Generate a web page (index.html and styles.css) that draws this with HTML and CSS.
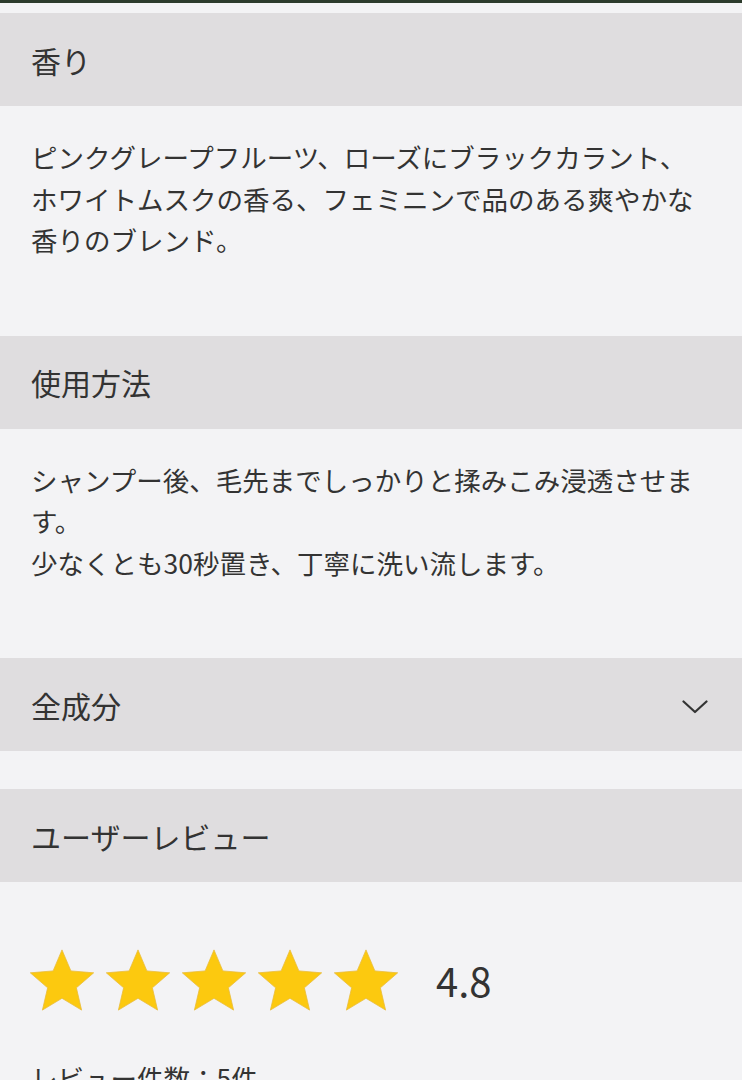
FILE: index.html
```html
<!DOCTYPE html>
<html lang="ja">
<head>
<meta charset="utf-8">
<link rel="stylesheet" href="styles.css">
</head>
<body>
<div class="topbar"></div>
<div class="page">
  <section class="block">
    <h2 class="head">香り</h2>
    <div class="body">
      <p>ピンクグレープフルーツ、ローズにブラックカラント、ホワイトムスクの香る、フェミニンで品のある爽やかな香りのブレンド。</p>
    </div>
  </section>
  <section class="block">
    <h2 class="head">使用方法</h2>
    <div class="body">
      <p>シャンプー後、毛先までしっかりと揉みこみ浸透させます。<br>少なくとも30秒置き、丁寧に洗い流します。</p>
    </div>
  </section>
  <section class="block collapsed">
    <h2 class="head">全成分
      <svg class="chev" width="26" height="14" viewBox="0 0 26 14"><path d="M1.5 1.5 L13 12 L24.5 1.5" fill="none" stroke="#333" stroke-width="2.2" stroke-linecap="round" stroke-linejoin="round"/></svg>
    </h2>
  </section>
  <section class="block review">
    <h2 class="head">ユーザーレビュー</h2>
    <div class="rating">
      <div class="stars">
        <svg class="star" viewBox="1.9 1.9 20.2 19.2"><path d="M12 17.27L18.18 21l-1.64-7.03L22 9.24l-7.19-.61L12 2 9.19 8.63 2 9.24l5.46 4.73L5.82 21z"/></svg>
        <svg class="star" viewBox="1.9 1.9 20.2 19.2"><path d="M12 17.27L18.18 21l-1.64-7.03L22 9.24l-7.19-.61L12 2 9.19 8.63 2 9.24l5.46 4.73L5.82 21z"/></svg>
        <svg class="star" viewBox="1.9 1.9 20.2 19.2"><path d="M12 17.27L18.18 21l-1.64-7.03L22 9.24l-7.19-.61L12 2 9.19 8.63 2 9.24l5.46 4.73L5.82 21z"/></svg>
        <svg class="star" viewBox="1.9 1.9 20.2 19.2"><path d="M12 17.27L18.18 21l-1.64-7.03L22 9.24l-7.19-.61L12 2 9.19 8.63 2 9.24l5.46 4.73L5.82 21z"/></svg>
        <svg class="star" viewBox="1.9 1.9 20.2 19.2"><path d="M12 17.27L18.18 21l-1.64-7.03L22 9.24l-7.19-.61L12 2 9.19 8.63 2 9.24l5.46 4.73L5.82 21z"/></svg>
      </div>
      <span class="score">4.8</span>
    </div>
    <p class="count">レビュー件数：5件</p>
  </section>
</div>
</body>
</html>
```
FILE: styles.css
```css
html, body {
  margin: 0;
  padding: 0;
  background: #f3f3f5;
}
body {
  font-family: "Noto Sans CJK JP", "Noto Sans", sans-serif;
  color: #333;
}
.topbar {
  height: 3px;
  background: #2c3b2c;
}
.page {
  padding-top: 10px;
}
.head {
  margin: 0;
  height: 93px;
  display: flex;
  align-items: center;
  justify-content: space-between;
  padding: 0 34px 0 31px;
  background: #dfdddf;
  font-size: 30px;
  font-weight: 400;
  color: #333;
}
.body {
  padding: 30px 31px 75px 31px;
}
.body p {
  margin: 0;
  font-size: 26.5px;
  line-height: 41.5px;
}
.collapsed {
  margin-bottom: 38px;
}
.chev {
  display: block;
  margin-top: 4px;
}
.rating {
  display: flex;
  align-items: center;
  padding: 67px 31px 0 30px;
}
.stars {
  display: flex;
  gap: 12px;
}
.star {
  width: 64px;
  height: 62px;
  fill: #fcc90f;
  stroke: #e9bc3a;
  stroke-width: 0.25;
  stroke-linejoin: round;
}
.score {
  margin-left: 38px;
  font-size: 40px;
  line-height: 1;
  color: #333;
}
.count {
  margin: 46px 0 0 31px;
  font-size: 26.5px;
  line-height: 41.5px;
}
```
